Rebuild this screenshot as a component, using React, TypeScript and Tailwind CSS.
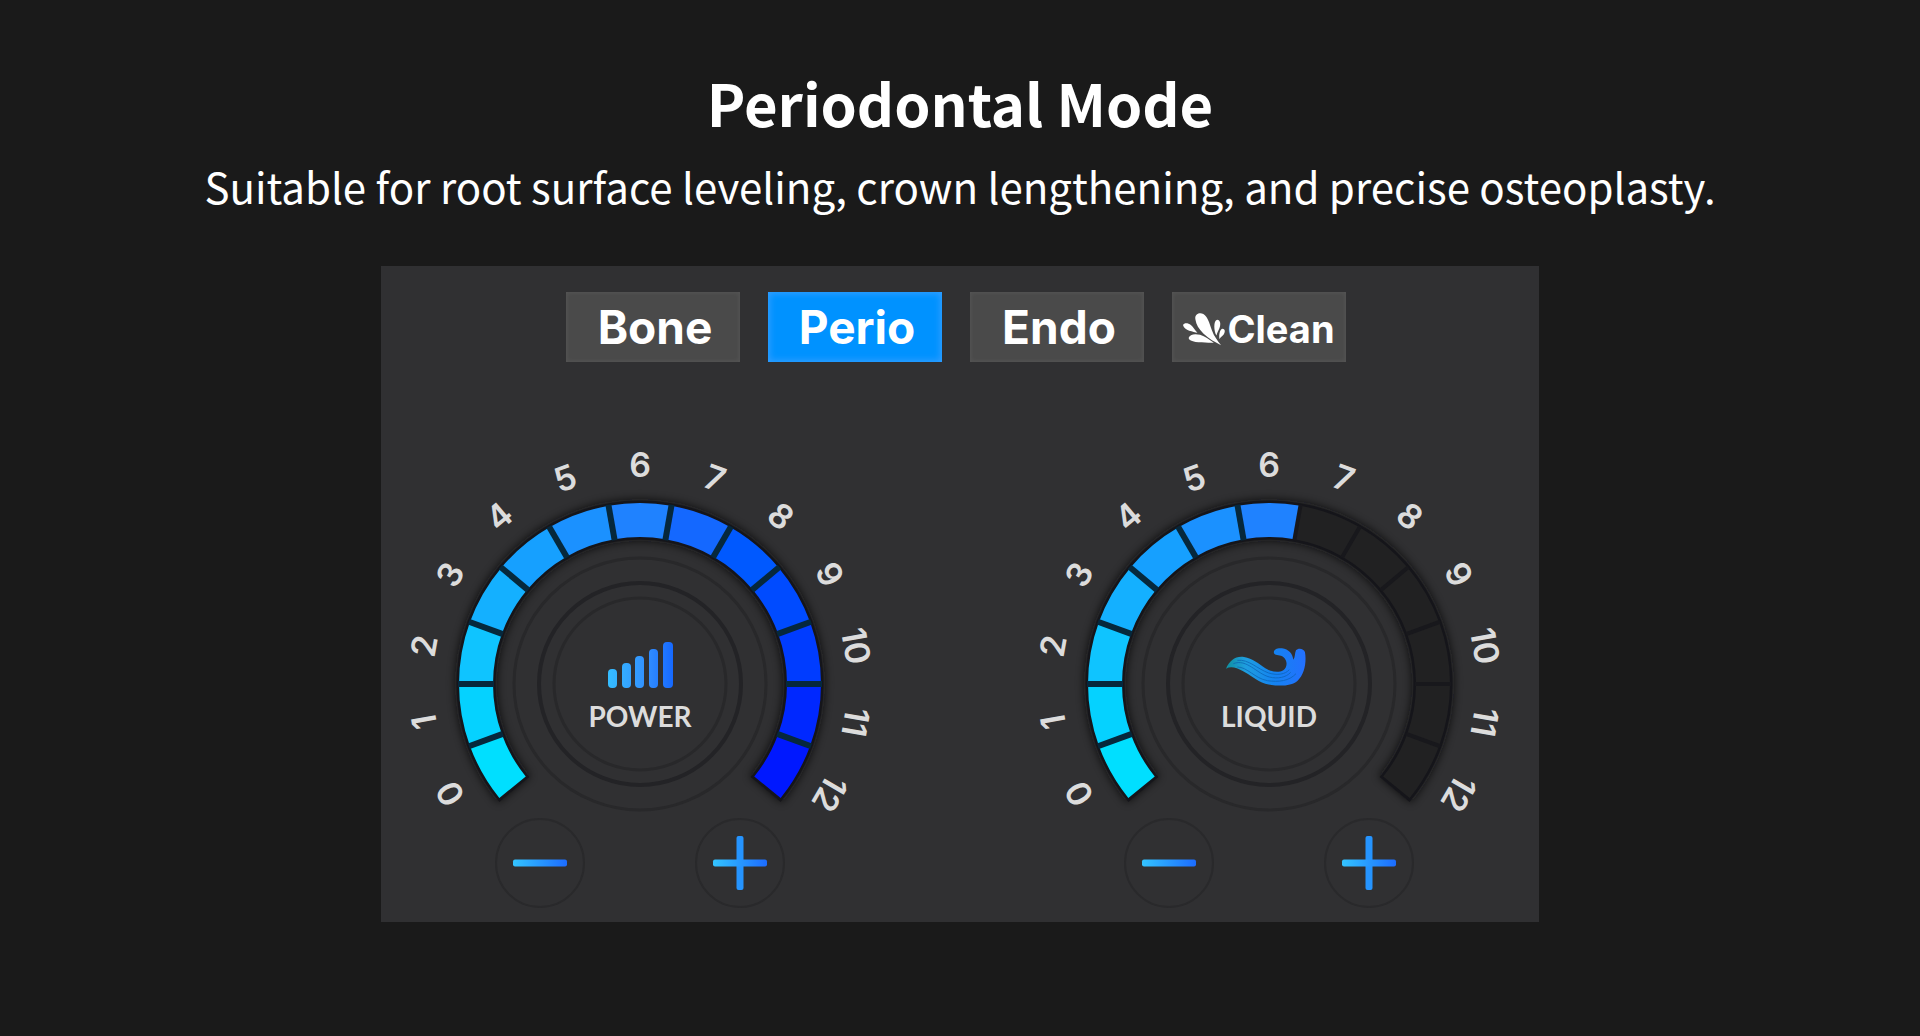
import React from 'react';

type Mode = 'Bone' | 'Perio' | 'Endo' | 'Clean';

const modes: Mode[] = ['Bone', 'Perio', 'Endo', 'Clean'];

const MAX_LEVEL = 12;
const CENTER = 240;
const STEP = 20;

const segmentColors = [
    '#00dfff', '#05d2ff', '#0fc4ff', '#14b0ff', '#16a0ff', '#1b91ff', '#1f82ff',
    '#1468ff', '#0059ff', '#004bff', '#003cff', '#0028ff', '#0018ff',
];

// angle is measured clockwise from twelve o'clock
const point = (angle: number, radius: number) => {
    const rad = (angle * Math.PI) / 180;
    return [CENTER + radius * Math.sin(rad), CENTER - radius * Math.cos(rad)];
};

const arc = (from: number, to: number, radius: number) => {
    const [x1, y1] = point(from, radius);
    const [x2, y2] = point(to, radius);
    return `M${x1} ${y1}A${radius} ${radius} 0 ${to - from > 180 ? 1 : 0} 1 ${x2} ${y2}`;
};

const SplashIcon = () => (
    <svg viewBox="0 0 128 100" fill="currentColor" className="h-[33px] w-[42px] shrink-0" aria-hidden="true">
        <path d="M38 20C34 4 50-4 62 3C76 12 80 30 88 52C94 70 106 84 116 98C98 88 78 78 62 62C48 48 40 34 38 20Z" />
        <path d="M0 36C4 28 16 30 24 36C32 43 36 52 44 60C32 56 4 54 0 36Z" />
        <path d="M17 76C20 64 36 62 52 66C68 71 78 80 94 90C70 90 20 92 17 76Z" />
        <path d="M104 20C114 20 116 34 111 46C108 54 104 60 102 68C94 56 92 22 104 20Z" />
        <path d="M120 48C129 48 129 58 124 65C119 71 115 73 111 79C109 68 112 50 120 48Z" />
    </svg>
);

const PowerIcon = () => (
    <g fill="url(#icon-gradient)">
        <rect x="208" y="225" width="9" height="19" rx="4" />
        <rect x="222" y="219" width="9" height="25" rx="4" />
        <rect x="235" y="212" width="9" height="32" rx="4" />
        <rect x="249" y="205" width="9" height="39" rx="4" />
        <rect x="263" y="198" width="10" height="46" rx="4" />
    </g>
);

const LiquidIcon = () => (
    <g transform="translate(171 177) scale(0.3333)">
        <path
            fill="url(#wave-gradient)"
            d="M78 143C88 118 108 104 132 108C158 112 176 128 196 142C214 153 236 156 250 148C262 138 264 120 250 108C242 101 228 106 222 97C219 86 232 80 246 82C266 85 278 98 280 116C286 108 284 96 288 88C294 80 312 82 315 94C320 122 314 160 292 180C270 198 228 196 196 188C168 180 150 160 128 150C110 141 94 134 78 143Z"
        />
        <g fill="none" stroke="#0b5fb0" strokeWidth="3" opacity="0.7">
            <path d="M100 128C140 112 170 158 208 168C232 174 258 170 272 154" />
            <path d="M112 118C146 114 172 144 206 156C232 164 256 160 268 146" />
            <path d="M112 138C142 138 164 172 202 179C236 184 268 180 288 158" />
        </g>
    </g>
);

interface StepButtonProps {
    label: string;
    plus?: boolean;
    onClick: () => void;
}

const StepButton: React.FC<StepButtonProps> = ({ label, plus, onClick }) => (
    <button
        type="button"
        aria-label={label}
        onClick={onClick}
        className="flex size-[90px] items-center justify-center rounded-full border-2 border-[#29292b] bg-[#303032]"
    >
        <svg viewBox="0 0 56 56" className="size-14" aria-hidden="true">
            {plus && <rect x="24.5" y="1" width="7" height="54" rx="2" fill="#2594ff" />}
            <rect x="1" y="24.5" width="54" height="7" rx="2" fill="url(#step-gradient)" />
        </svg>
    </button>
);

interface DialProps {
    label: string;
    icon: React.ReactNode;
    initialLevel: number;
}

const Dial: React.FC<DialProps> = ({ label, icon, initialLevel }) => {
    const [level, setLevel] = React.useState<number>(initialLevel);
    const levels = Array.from({ length: MAX_LEVEL + 1 }, (_, i) => i);

    return (
        <div className="flex w-[500px] flex-col items-center">
            <svg viewBox="-10 -10 500 384" className="w-full overflow-visible" role="img" aria-label={`${label} ${level}`}>
                {/* track */}
                <path d={arc(-130, 130, 164)} fill="none" stroke="#0c0c10" strokeWidth="42" opacity="0.7" filter="url(#soft)" />
                <path d={arc(-130, 130, 164)} fill="none" stroke="#15151a" strokeWidth="39" />
                {levels.map((n) => {
                    const from = n === 0 ? -129 : -130 + n * STEP;
                    const to = n === MAX_LEVEL ? 129 : -110 + n * STEP;
                    return (
                        <path
                            key={n}
                            d={arc(from, to, 164)}
                            fill="none"
                            stroke={n <= level ? segmentColors[n] : '#212122'}
                            strokeWidth="34"
                        />
                    );
                })}
                {levels.slice(1).map((n) => {
                    const [x1, y1] = point(-130 + n * STEP, 146);
                    const [x2, y2] = point(-130 + n * STEP, 182);
                    const lit = n <= level;
                    return (
                        <line key={n} x1={x1} y1={y1} x2={x2} y2={y2} stroke={lit ? '#06283c' : '#18181c'} strokeWidth={lit ? 6 : 4} />
                    );
                })}
                {/* knob */}
                <g fill="none" stroke="#28282a">
                    <circle cx="240" cy="240" r="126" strokeWidth="3" />
                    <circle cx="240" cy="240" r="101" strokeWidth="4" stroke="#232326" />
                    <circle cx="240" cy="240" r="86" strokeWidth="3" />
                </g>
                {icon}
                <text x="240" y="283" textAnchor="middle" fill="#dcdcdc" className="font-['Lato',sans-serif] text-[28px] font-bold">
                    {label}
                </text>
                {/* scale */}
                {levels.map((n) => (
                    <text
                        key={n}
                        x="240"
                        y="33"
                        textAnchor="middle"
                        fill="#dcdcdc"
                        transform={`rotate(${-120 + n * STEP} 240 240)`}
                        className="font-['Inter',sans-serif] text-[34px] font-semibold"
                    >
                        {n}
                    </text>
                ))}
            </svg>
            <div className="flex gap-[110px]">
                <StepButton label={`Decrease ${label}`} onClick={() => setLevel(Math.max(0, level - 1))} />
                <StepButton label={`Increase ${label}`} plus onClick={() => setLevel(Math.min(MAX_LEVEL, level + 1))} />
            </div>
        </div>
    );
};

const SharedDefs = () => (
    <svg className="absolute size-0" aria-hidden="true">
        <defs>
            <linearGradient id="icon-gradient" gradientUnits="userSpaceOnUse" x1="208" y1="0" x2="273" y2="0">
                <stop offset="0" stopColor="#35bdff" />
                <stop offset="0.6" stopColor="#328fff" />
                <stop offset="1" stopColor="#1669ff" />
            </linearGradient>
            <linearGradient id="wave-gradient" x1="0" y1="0" x2="1" y2="0">
                <stop offset="0" stopColor="#0f8f9f" />
                <stop offset="0.25" stopColor="#1f9ee0" />
                <stop offset="0.6" stopColor="#1483f0" />
                <stop offset="1" stopColor="#2470ff" />
            </linearGradient>
            <linearGradient id="step-gradient" x1="0" y1="0" x2="1" y2="0">
                <stop offset="0" stopColor="#33c4ff" />
                <stop offset="1" stopColor="#1c6cff" />
            </linearGradient>
            <filter id="soft" filterUnits="userSpaceOnUse" x="0" y="0" width="480" height="400">
                <feGaussianBlur stdDeviation="4" />
            </filter>
        </defs>
    </svg>
);

const App: React.FC = () => {
    const [mode, setMode] = React.useState<Mode>('Perio');

    return (
        <main className="flex min-h-screen flex-col items-center bg-[#1a1a1a] px-6 pt-[58px] pb-12 text-white">
            <SharedDefs />
            <h1 className="text-center font-['Noto_Sans_CJK_SC',sans-serif] text-[58px] leading-[88px] font-bold">Periodontal Mode</h1>
            <p className="text-center font-['Noto_Sans_CJK_SC',sans-serif] text-[42px] leading-[80px]">
                Suitable for root surface leveling, crown lengthening, and precise osteoplasty.
            </p>
            <section className="mt-10 w-full max-w-[1158px] bg-[#303032] pt-[26px] pb-[14px]">
                {/* modes */}
                <div className="flex justify-center gap-7 pr-2">
                    {modes.map((item) => (
                        <button
                            key={item}
                            type="button"
                            aria-pressed={item === mode}
                            onClick={() => setMode(item)}
                            className={`flex h-[70px] w-[174px] items-center justify-center gap-0.5 font-['Inter',sans-serif] font-bold ${
                                item === 'Clean' ? 'pt-1 text-[38px]' : 'pl-1 text-[46px]'
                            } ${
                                item === mode
                                    ? 'bg-[#0092ff] shadow-[inset_0_0_6px_2px_#2f9dff]'
                                    : 'bg-[#4a4a4a] shadow-[inset_0_0_4px_1px_#555555]'
                            }`}
                        >
                            {item === 'Clean' && <SplashIcon />}
                            {item}
                        </button>
                    ))}
                </div>
                {/* dials */}
                <div className="mt-[72px] flex flex-wrap justify-between pr-5 pl-[9px]">
                    <Dial label="POWER" icon={<PowerIcon />} initialLevel={12} />
                    <Dial label="LIQUID" icon={<LiquidIcon />} initialLevel={6} />
                </div>
            </section>
        </main>
    );
};

export default App;
